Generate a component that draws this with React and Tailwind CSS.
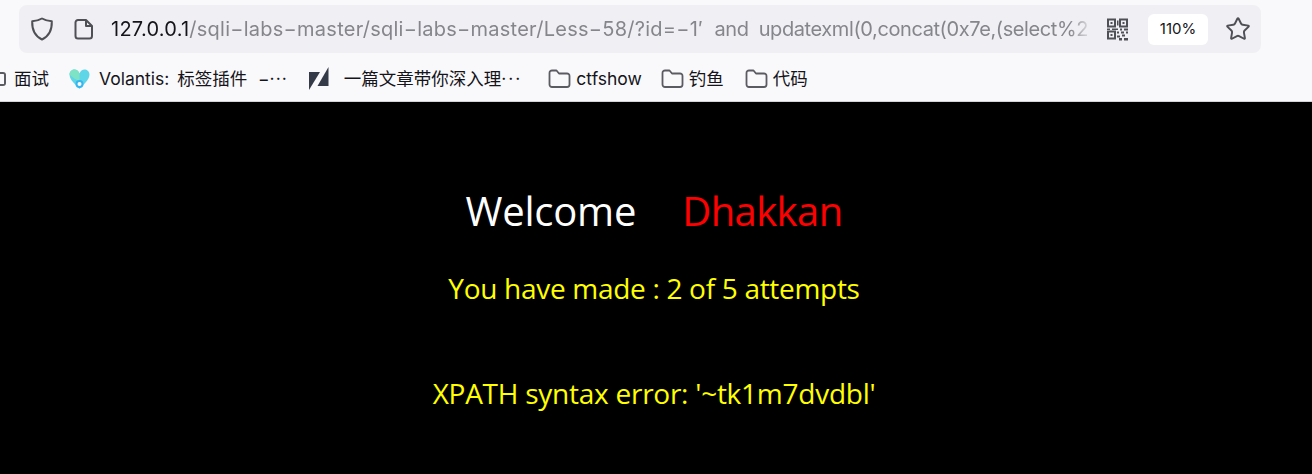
import { Star } from "lucide-react";

const CJK = "font-['Inter','Noto_Sans_CJK_SC',sans-serif]";

function Shield() {
  return (
    <svg width="24" height="26" viewBox="0 0 24 26" fill="none" stroke="#4f4f56" strokeWidth="2" strokeLinejoin="round">
      <path d="M12 2.5c3 1.8 6.2 2.6 9.8 2.8.3 8.5-2.6 14.8-9.8 18.2C4.8 20.100 1.900 13.800 2.200 5.300 5.800 5.100 9 4.300 12 2.500Z" />
    </svg>
  );
}

function PageIcon() {
  return (
    <svg width="20" height="22" viewBox="0 0 20 22" fill="none" stroke="#4f4f56" strokeWidth="2" strokeLinejoin="round">
      <path d="M4 2h8l6 6v10a2.500 2.500 0 0 1-2.500 2.500h-11.500a2.500 2.500 0 0 1-2.500-2.500v-13.500a2.500 2.500 0 0 1 2.500-2.500Z" />
      <path d="M12 2v6h6" />
    </svg>
  );
}

function QrIcon() {
  return (
    <svg width="22" height="23" viewBox="0 0 22 22" fill="#4f4f56" fillRule="evenodd">
      <path d="M0 0h9v9H0ZM2 2v5h5V2Z" />
      <path d="M12 0h9v9h-9ZM14 2v5h5V2Z" />
      <path d="M0 12h9v9H0ZM2 14v5h5v-5Z" />
      <rect x="3.500" y="3.500" width="2" height="2" />
      <rect x="15.500" y="3.500" width="2" height="2" />
      <rect x="3.500" y="15.500" width="2" height="2" />
      <path d="M10 2h1.500v5H10ZM0 10h3v1.500H0ZM5 10h6v1.500H5ZM13 10h2v2h-2ZM17 10h4v2h-4ZM10 13h2v2h-2ZM14 13h3v2h-3ZM19 13h2v2h-2ZM10 17h3v2h-3ZM15 16h3v2h-3ZM12 19.500h3V22h-3ZM17 19.500h4V22h-4Z" />
    </svg>
  );
}

function Folder() {
  return (
    <svg width="23" height="20" viewBox="0 0 23 20" fill="none" stroke="#5b5b62" strokeWidth="1.800" strokeLinejoin="round">
      <path d="M1.500 4a2.500 2.500 0 0 1 2.500-2.500h4.500l2.500 3h8a2.500 2.500 0 0 1 2.500 2.500v8.500a2.500 2.500 0 0 1-2.500 2.500H4a2.500 2.500 0 0 1-2.500-2.500Z" />
    </svg>
  );
}

function HeartLogo() {
  return (
    <svg width="21" height="21" viewBox="0 0 21 21">
      <path d="M10.500 20C7 16 .5 11 .5 5.500 .5 2.500 3 .5 5.500 .5c2.200 0 4 1.500 5 4 1-2.500 2.800-4 5-4C18 .5 20.500 2.500 20.500 5.500 20.500 11 14 16 10.500 20Z" fill="#5fd6e8" />
      <path d="M.5 5.500C.5 2.500 3 .5 5.500 .5c2.200 0 4 1.500 5 4v8C6 10 3 8 .5 5.500Z" fill="#7de3c4" />
      <circle cx="10.500" cy="15" r="4" fill="#35b6f0" />
      <circle cx="10.500" cy="15" r="2" fill="#ffffff" />
    </svg>
  );
}

function ZhihuLogo() {
  return (
    <svg width="20" height="24" viewBox="0 0 20 24" fill="#353a48">
      <path d="M0 5h11L0 23Z" />
      <path d="M19.500 0v19H8.500Z" />
    </svg>
  );
}

function Bookmark({ icon, children, className }) {
  return (
    <div className={`flex items-center shrink-0 ${className}`}>
      {icon}
      <span className="text-[17.500px] leading-5 text-[#15141a] whitespace-pre">{children}</span>
    </div>
  );
}

export default function App() {
  return (
    <div className={`w-[1312px] h-[474px] overflow-hidden bg-black ${CJK}`}>
      <div className="h-[102px] bg-[#f9f9fb] border-b border-[#d4d4d8] pt-[5px] pl-[19px] pr-[51px]">
        <div className="h-[48px] bg-[#f0f0f4] rounded-lg flex items-center pl-[11px] pr-[9px]">
          <Shield />
          <div className="ml-[20px]"><PageIcon /></div>
          <div className="ml-[17px] w-[988px] overflow-hidden whitespace-pre text-[20px] tracking-[0.25px] text-[#85858c] leading-6 [mask-image:linear-gradient(to_right,black_97%,transparent_99.500%)]">
            <span className="text-[#15141a]">127.0.0.1</span>/sqli−labs−master/sqli−labs−master/Less−58/?id=−1′  <span className="tracking-[-0.5px]">and  </span><span className="tracking-[-0.4px]">updatexml(0,concat(0x7e,(select%2</span>
          </div>
          <div className="ml-[8px]"><QrIcon /></div>
          <div className="ml-[19px] w-[60px] h-[31px] bg-white rounded-md flex items-center justify-center text-[15px] text-[#15141a]">110%</div>
          <Star className="ml-[17px] text-[#4f4f56]" size={26} strokeWidth={1.800} />
        </div>
        <div className="-ml-[19px] mt-[14px] flex items-center h-6 overflow-hidden">
          <div className="w-[6px] h-[14px] border-2 border-l-0 border-[#5b5b62] rounded-r-[3px] shrink-0" />
          <Bookmark className="ml-[8px]">面试</Bookmark>
          <Bookmark className="ml-[20px] gap-[9px]" icon={<HeartLogo />}>
            <span className="[word-spacing:-1px]">Volantis:  标签插件  </span>
            <span className="ml-[3px]">−<span className="tracking-[1px]">···</span></span>
          </Bookmark>
          <Bookmark className="ml-[21px] gap-[15px]" icon={<ZhihuLogo />}>
            一篇文章带你深入理<span className="tracking-[2px]">···</span>
          </Bookmark>
          <Bookmark className="ml-[26px] gap-[5px]" icon={<Folder />}>ctfshow</Bookmark>
          <Bookmark className="ml-[19px] gap-[5px]" icon={<Folder />}>钓鱼</Bookmark>
          <Bookmark className="ml-[21px] gap-[5px]" icon={<Folder />}>代码</Bookmark>
        </div>
      </div>
      <div className="font-['Open_Sans',sans-serif] flex flex-col items-center pt-[81px] pr-[4px]">
        <div className="flex gap-[46px] text-[40px] leading-[56px]">
          <span className="text-white tracking-[-0.2px]">Welcome</span>
          <span className="text-[#ff0000] tracking-[-0.6px]">Dhakkan</span>
        </div>
        <p className="mt-[31px] text-[28px] leading-[36px] text-[#ffff00] tracking-[-0.3px]">You have made : 2 of 5 attempts</p>
        <p className="mt-[69px] text-[28px] leading-[36px] text-[#ffff00] tracking-[-0.25px]">XPATH syntax error: '~tk1m7dvdbl'</p>
      </div>
    </div>
  );
}
